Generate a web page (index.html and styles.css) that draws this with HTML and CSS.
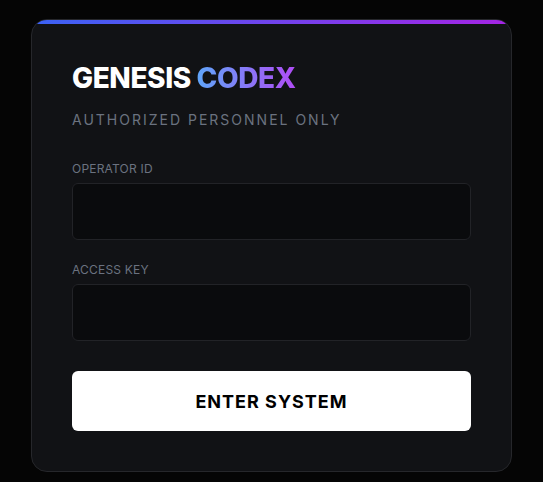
FILE: index.html
```html
<!DOCTYPE html>
<html>

<head>
    <meta charset="utf-8">
    <title>Genesis Codex</title>
    <link rel="stylesheet" href="styles.css">
</head>

<body>
    <div class="login-box">
        <h1><span class="brand">GENESIS</span> <span class="codex">CODEX</span></h1>
        <p class="sub">AUTHORIZED PERSONNEL ONLY</p>
        <div class="input-box">
            <label>OPERATOR ID</label>
            <input type="text">
        </div>
        <div class="input-box">
            <label>ACCESS KEY</label>
            <input type="password">
        </div>
        <button>ENTER SYSTEM</button>
    </div>
</body>
</html>
```

FILE: styles.css
```css
*{
    margin: 0;
    padding: 0;
    box-sizing: border-box;
}
body{
    background: #050505;
    font-family: Inter, "Liberation Sans", sans-serif;
    padding-top: 19px;
}
.login-box{
    position: relative;
    width: 481px;
    margin: 0 auto;
    background-color: #111215;
    border: 1px solid #26272b;
    border-radius: 16px;
    padding: 40px;
    overflow: hidden;
}
.login-box::before{
    content: "";
    position: absolute;
    top: 0;
    left: 0;
    right: 0;
    height: 4px;
    background: linear-gradient(90deg, #3b62f4, #a524e4);
}
.login-box h1{
    font-size: 28px;
    font-weight: 800;
    line-height: 1.3;
    letter-spacing: -0.4px;
    color: #fff;
}
.login-box h1 .codex{
    background: linear-gradient(90deg, #60a5fa, #b04cf5);
    -webkit-background-clip: text;
    background-clip: text;
    color: transparent;
}
.login-box .sub{
    margin-top: 15px;
    font-size: 14px;
    letter-spacing: 2px;
    color: #6b7280;
}
.login-box .input-box{
    margin-top: 33px;
}
.login-box .input-box + .input-box{
    margin-top: 22px;
}
.login-box .input-box label{
    display: block;
    font-size: 12px;
    letter-spacing: 0.2px;
    color: #6b7280;
    margin-bottom: 7px;
}
.login-box .input-box input{
    outline: none;
    display: block;
    width: 100%;
    height: 57px;
    border-radius: 6px;
    border: 1px solid #222327;
    background: #0a0b0d;
    color: #fff;
    padding: 0 16px;
}
.login-box button{
    display: block;
    width: 100%;
    height: 60px;
    margin-top: 30px;
    border: none;
    border-radius: 6px;
    background: #fff;
    color: #000;
    font-family: inherit;
    font-size: 18px;
    font-weight: 700;
    letter-spacing: 1px;
    cursor: pointer;
}
```
